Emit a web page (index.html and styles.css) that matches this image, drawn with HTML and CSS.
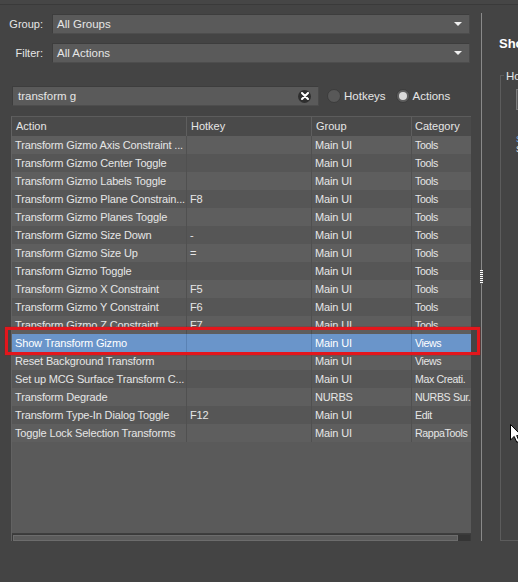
FILE: index.html
```html
<!DOCTYPE html>
<html>
<head>
<meta charset="utf-8">
<link rel="stylesheet" href="styles.css">
</head>
<body>
<div class="window">
  <div class="topline"></div>
  <div class="main">
    <div class="left">
      <div class="field-row">
        <span class="label">Group:</span>
        <div class="combo"><span>All Groups</span><span class="arrow"></span></div>
      </div>
      <div class="field-row second">
        <span class="label">Filter:</span>
        <div class="combo"><span>All Actions</span><span class="arrow"></span></div>
      </div>
      <div class="search-row">
        <div class="search">
          <span>transform g</span>
          <span class="clear">
            <svg width="8" height="8" viewBox="0 0 8 8"><path d="M1 1L7 7M7 1L1 7" stroke="#fff" stroke-width="2" stroke-linecap="round"/></svg>
          </span>
        </div>
        <span class="radio"></span><span class="radio-label">Hotkeys</span>
        <span class="radio checked"></span><span class="radio-label">Actions</span>
      </div>
      <div class="table">
        <div class="thead">
          <div class="th">Action</div><div class="th">Hotkey</div><div class="th">Group</div><div class="th">Category</div>
        </div>
        <div class="tbody">
          <div class="tr"><div class="td">Transform Gizmo Axis Constraint ...</div><div class="td"></div><div class="td">Main UI</div><div class="td">Tools</div></div>
          <div class="tr"><div class="td">Transform Gizmo Center Toggle</div><div class="td"></div><div class="td">Main UI</div><div class="td">Tools</div></div>
          <div class="tr"><div class="td">Transform Gizmo Labels Toggle</div><div class="td"></div><div class="td">Main UI</div><div class="td">Tools</div></div>
          <div class="tr"><div class="td">Transform Gizmo Plane Constrain...</div><div class="td">F8</div><div class="td">Main UI</div><div class="td">Tools</div></div>
          <div class="tr"><div class="td">Transform Gizmo Planes Toggle</div><div class="td"></div><div class="td">Main UI</div><div class="td">Tools</div></div>
          <div class="tr"><div class="td">Transform Gizmo Size Down</div><div class="td">-</div><div class="td">Main UI</div><div class="td">Tools</div></div>
          <div class="tr"><div class="td">Transform Gizmo Size Up</div><div class="td">=</div><div class="td">Main UI</div><div class="td">Tools</div></div>
          <div class="tr"><div class="td">Transform Gizmo Toggle</div><div class="td"></div><div class="td">Main UI</div><div class="td">Tools</div></div>
          <div class="tr"><div class="td">Transform Gizmo X Constraint</div><div class="td">F5</div><div class="td">Main UI</div><div class="td">Tools</div></div>
          <div class="tr"><div class="td">Transform Gizmo Y Constraint</div><div class="td">F6</div><div class="td">Main UI</div><div class="td">Tools</div></div>
          <div class="tr"><div class="td">Transform Gizmo Z Constraint</div><div class="td">F7</div><div class="td">Main UI</div><div class="td">Tools</div></div>
          <div class="tr selected"><div class="td">Show Transform Gizmo</div><div class="td"></div><div class="td">Main UI</div><div class="td">Views</div></div>
          <div class="tr"><div class="td">Reset Background Transform</div><div class="td"></div><div class="td">Main UI</div><div class="td">Views</div></div>
          <div class="tr"><div class="td">Set up MCG Surface Transform C...</div><div class="td"></div><div class="td">Main UI</div><div class="td">Max Creati.</div></div>
          <div class="tr"><div class="td">Transform Degrade</div><div class="td"></div><div class="td">NURBS</div><div class="td">NURBS Sur.</div></div>
          <div class="tr"><div class="td">Transform Type-In Dialog Toggle</div><div class="td">F12</div><div class="td">Main UI</div><div class="td">Edit</div></div>
          <div class="tr"><div class="td">Toggle Lock Selection Transforms</div><div class="td"></div><div class="td">Main UI</div><div class="td">RappaTools</div></div>
        </div>
        <div class="hscroll"><div class="thumb"></div><div class="track-end"></div></div>
      </div>
    </div>
    <div class="splitter"><span class="grip"></span></div>
    <div class="right">
      <div class="title">Show Transform Gizmo</div>
      <div class="groupbox">
        <span class="legend">Hotkey</span>
        <div class="hk-input"></div>
        <div class="note blue">S</div>
        <div class="note">S</div>
      </div>
    </div>
  </div>
  <div class="highlight"></div>
  <svg class="pointer" width="12" height="19" viewBox="0 0 12 19">
    <path d="M0.5 0.5 L0.5 16 L4.2 12.4 L6.8 18.3 L9.2 17.3 L6.7 11.6 L11.5 11.6 Z" fill="#fff" stroke="#000" stroke-width="1"/>
  </svg>
</div>
</body>
</html>
```
FILE: styles.css
```css
* { box-sizing: border-box; }
html, body { margin: 0; padding: 0; background: #444444; }
body {
  font-family: "Liberation Sans", Arial, sans-serif;
  font-size: 11px;
  color: #e6e6e6;
}
.window {
  position: relative;
  width: 518px;
  height: 582px;
  overflow: hidden;
  background: #444444;
}
.topline {
  height: 5px;
  border-bottom: 1px solid #3a3a3a;
  background: #464646;
}
.main {
  display: flex;
  height: 537px;
}
.left {
  width: 481px;
  flex: none;
  padding-top: 9px;
}
.field-row {
  display: flex;
  align-items: center;
  height: 20px;
}
.field-row.second { margin-top: 9px; }
.label {
  width: 43px;
  text-align: right;
  margin-right: 9px;
  font-size: 11px;
}
.combo {
  width: 418px;
  height: 20px;
  background: #5a5a5a;
  border: 1px solid #3d3d3d;
  border-right-color: #4a4a4a;
  border-bottom-color: #4d4d4d;
  display: flex;
  align-items: center;
  justify-content: space-between;
  padding: 0 6px 0 4px;
  font-size: 11.5px;
}
.arrow {
  width: 0; height: 0;
  border-left: 4px solid transparent;
  border-right: 4px solid transparent;
  border-top: 4px solid #f0f0f0;
  margin-right: 1px;
}
.search-row {
  display: flex;
  align-items: center;
  margin-top: 23px;
  height: 20px;
}
.search {
  margin-left: 12px;
  width: 307px;
  height: 20px;
  background: #5a5a5a;
  border: 1px solid #3d3d3d;
  border-right-color: #4a4a4a;
  border-bottom-color: #4d4d4d;
  display: flex;
  align-items: center;
  justify-content: space-between;
  padding: 0 7px 0 5px;
  font-size: 11.5px;
}
.clear {
  width: 13px;
  height: 13px;
  border-radius: 50%;
  background: #2e2e2e;
  display: flex;
  align-items: center;
  justify-content: center;
}
.radio {
  width: 14px;
  height: 14px;
  border-radius: 50%;
  background: #585858;
  border: 1px solid #3c3c3c;
  margin-left: 8px;
  display: flex;
  align-items: center;
  justify-content: center;
}
.radio.checked { margin-left: 10px; background: #5e5e5e; }
.radio.checked::after {
  content: "";
  width: 8px;
  height: 8px;
  border-radius: 50%;
  background: #dadada;
}
.radio-label {
  margin-left: 3px;
  font-size: 11.5px;
}
.table {
  margin-top: 10px;
  margin-left: 11px;
  width: 460px;
  height: 425px;
  border-left: 1px solid #626262;
  border-top: 1px solid #5c5c5c;
  background: #5a5a5a;
  display: flex;
  flex-direction: column;
}
.thead, .tr {
  display: grid;
  grid-template-columns: 175px 125px 100px 59px;
}
.thead {
  height: 19px;
  background: #4a4a4a;
}
.th {
  line-height: 19px;
  padding-left: 4px;
  border-right: 1px solid #5e5e5e;
  white-space: nowrap;
  overflow: hidden;
}
.th:last-child { border-right: none; padding-left: 3px; }
.tbody {
  flex: 1;
  background: #5a5a5a;
}
.tr {
  height: 18px;
  background: #5e5e5e;
}
.tr:nth-child(even) { background: #565656; }
.td {
  line-height: 19px;
  padding-left: 3px;
  border-right: 1px solid #505050;
  white-space: nowrap;
  overflow: hidden;
  letter-spacing: -0.15px;
}
.td:last-child { border-right: none; letter-spacing: -0.35px; padding-left: 3px; font-size: 10.6px; }
.tr.selected { background: #6a95ca; color: #fff; }
.tr.selected .td { border-right-color: #5a82b4; }
.tr.selected .td:last-child { border-right: none; }
.hscroll {
  height: 8px;
  background: #3a3a3a;
  border-top: 1px solid #3e3e3e;
  display: flex;
  padding: 1px 1px 0 1px;
}
.thumb {
  width: 445px;
  height: 6px;
  background: #5c5c5c;
  border: 1px solid #6c6c6c;
}
.track-end { flex: 1; background: #353535; }
.splitter {
  width: 1px;
  flex: none;
  margin-top: 8px;
  height: 528px;
  background: #8a8a8a;
  position: relative;
}
.grip {
  position: absolute;
  left: -1px;
  top: 257px;
  width: 3px;
  height: 14px;
  background: repeating-linear-gradient(#ffffff 0 1px, #5a5a5a 1px 2px);
}
.right {
  flex: 1;
  min-width: 0;
  overflow: hidden;
  padding-left: 17px;
}
.title {
  margin-top: 31px;
  font-size: 13px;
  font-weight: bold;
  color: #ffffff;
  white-space: nowrap;
  line-height: 16px;
}
.groupbox {
  position: relative;
  margin-top: 23px;
  margin-left: 1px;
  height: 466px;
  border-left: 1px solid #5c5c5c;
  border-top: 1px solid #5c5c5c;
  border-bottom: 1px solid #5c5c5c;
  padding-left: 15px;
}
.legend {
  display: block;
  margin-top: -8px;
  margin-left: -12px;
  padding: 0 2px;
  width: max-content;
  background: #444444;
  font-size: 11.5px;
  line-height: 16px;
  white-space: nowrap;
}
.hk-input {
  margin-top: 5px;
  width: 40px;
  height: 21px;
  background: #5a5a5a;
  border: 1px solid #7a7a7a;
}
.note {
  font-size: 9px;
  line-height: 10px;
  white-space: nowrap;
}
.note.blue { margin-top: 24px; color: #6fa8e0; }
.highlight {
  position: absolute;
  left: 5px;
  top: 327px;
  width: 475px;
  height: 28px;
  border: 3px solid #e3161c;
  box-shadow: 0 0 1px #b00;
}
.pointer {
  position: absolute;
  left: 510px;
  top: 424px;
}
```
